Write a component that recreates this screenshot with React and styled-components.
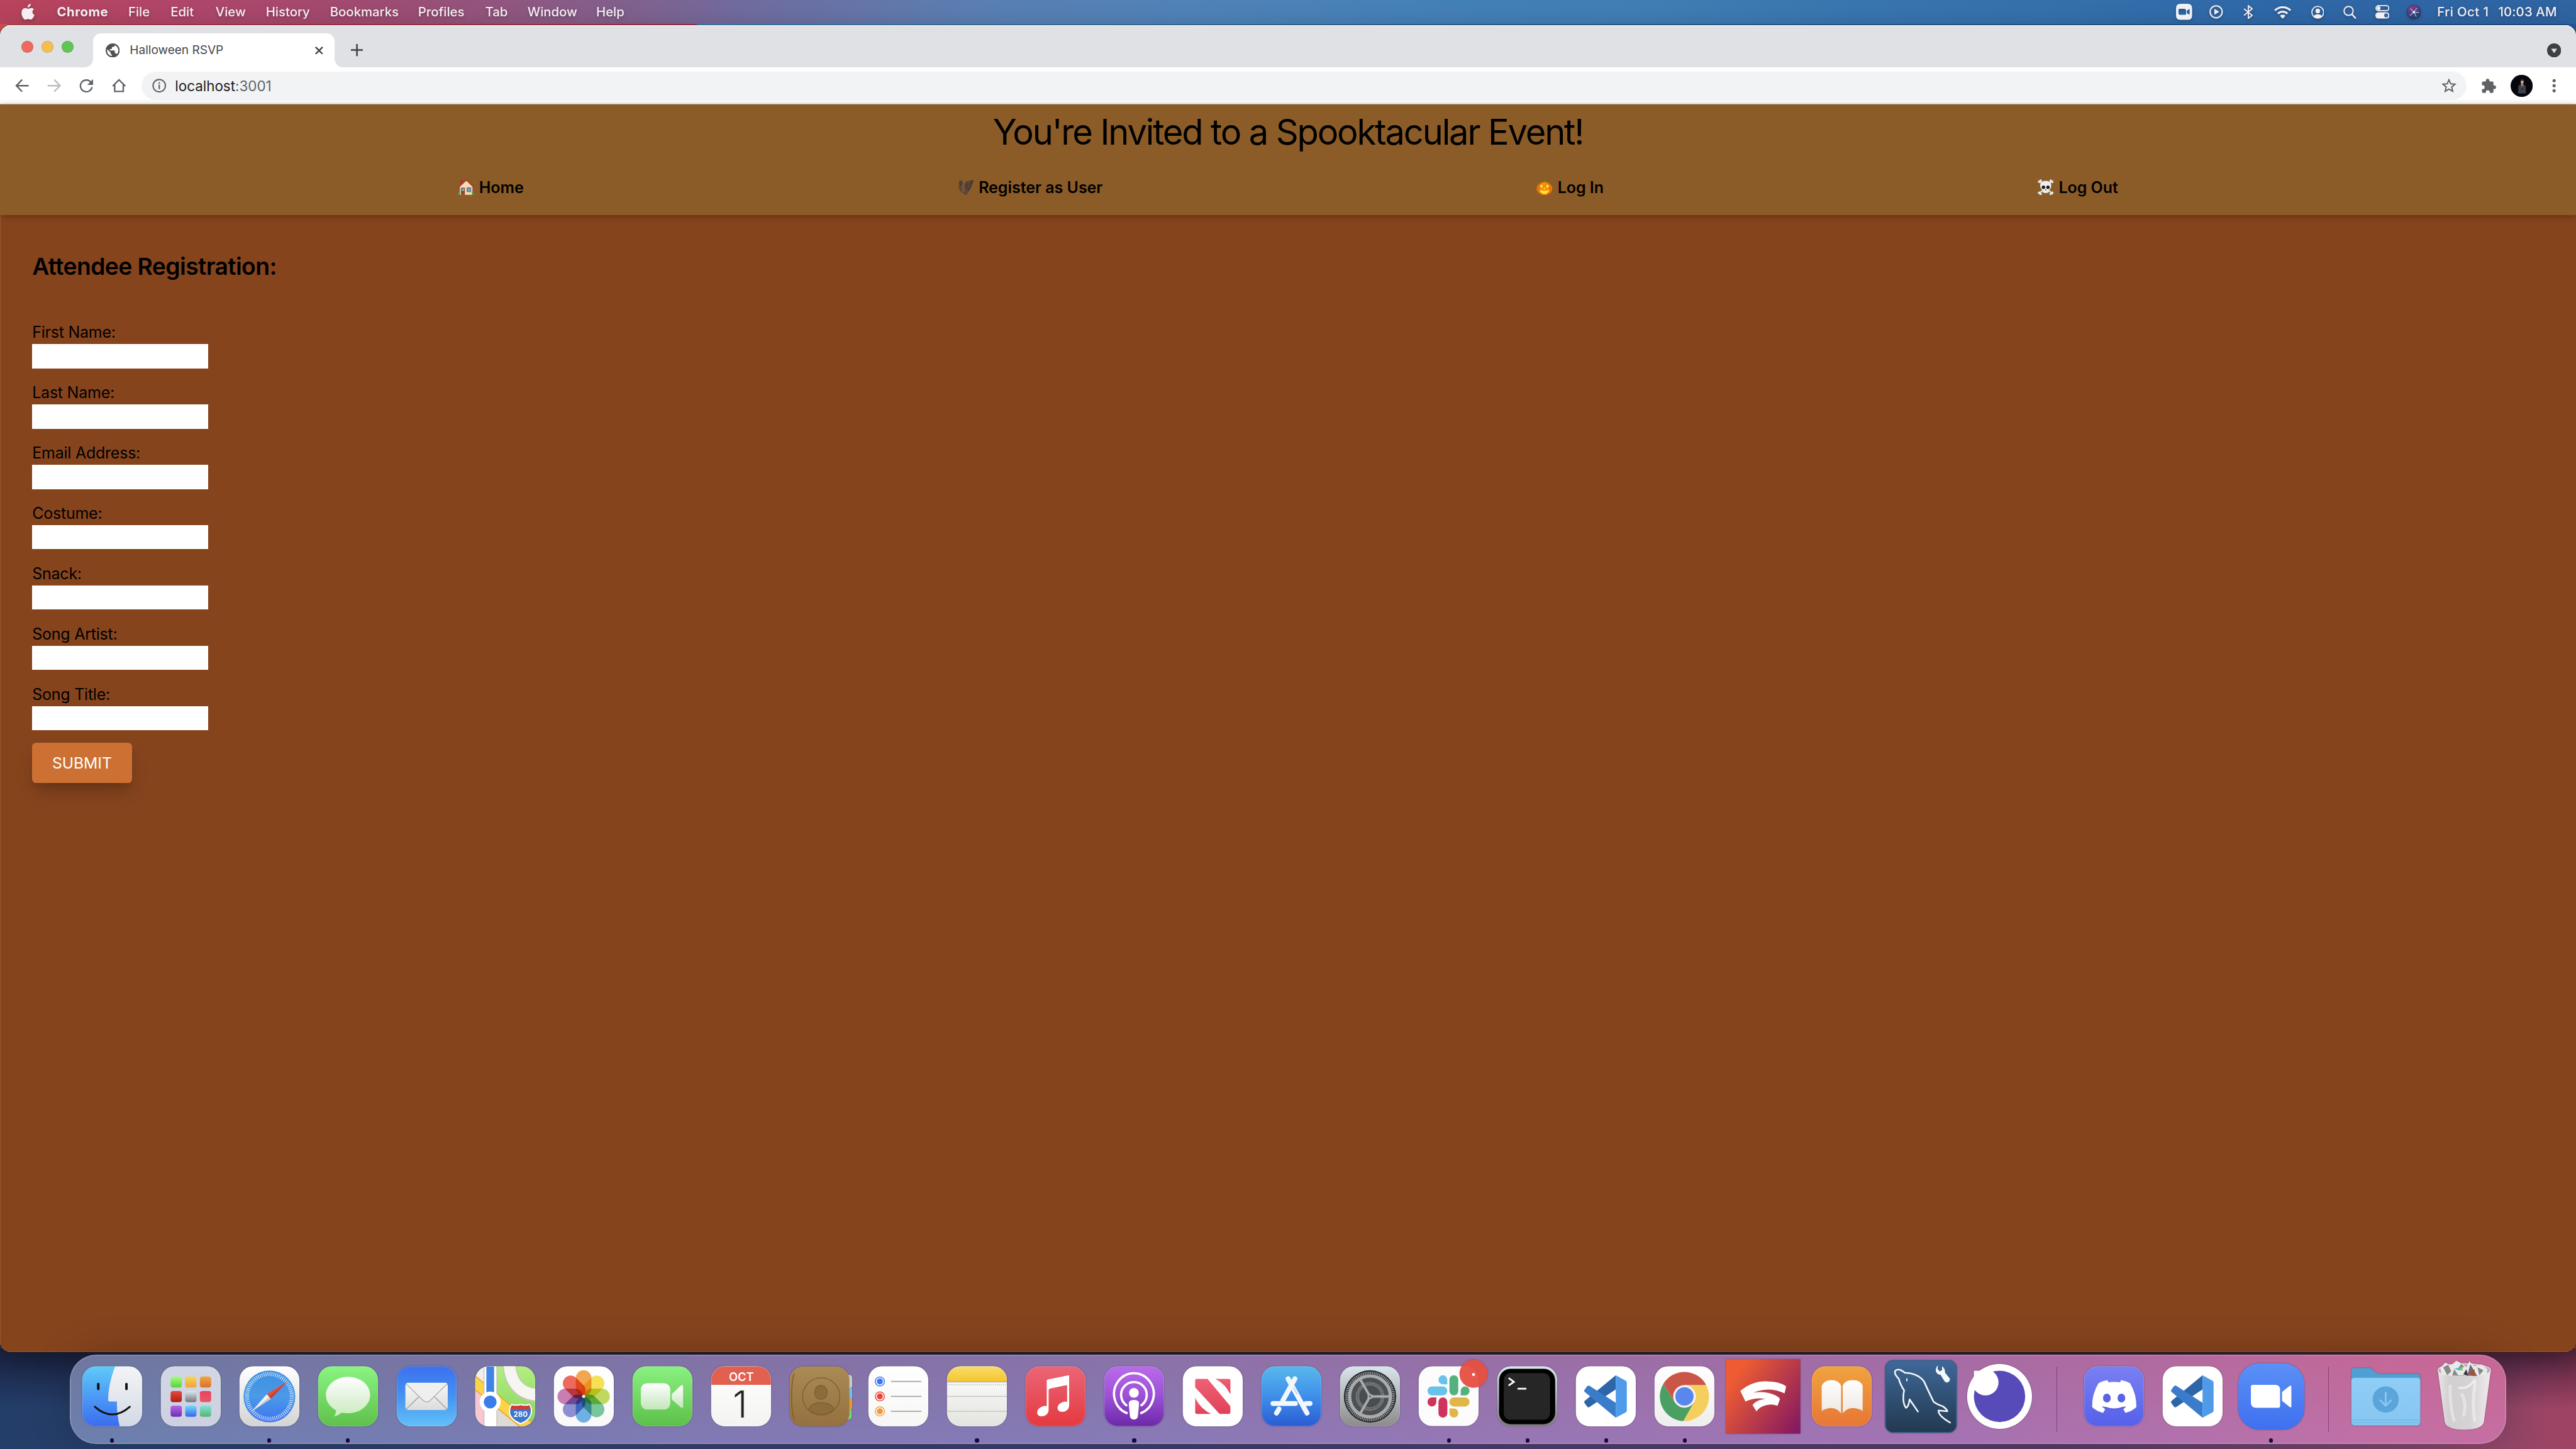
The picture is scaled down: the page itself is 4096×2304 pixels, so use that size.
import React from "react";
import styled, { createGlobalStyle } from "styled-components";

const Global = createGlobalStyle`
  html { font-size: 16px; }
  *, *::before, *::after { box-sizing: border-box; }
  body { margin: 0; overflow: hidden; font-family: Inter, "Liberation Sans", sans-serif; color: #000; }
  svg { display: block; flex: none; }
`;

/* 1rem is ten points of the desktop */
const Desktop = styled.div`
  display: flex;
  flex-direction: column;
  width: 256rem;
  height: 144rem;
  background:
    linear-gradient(90deg, #d4504f 0, #c03a54 8%, #b8334f 27%, #4a8ec2 27.1%, #3f80b8 45%, #2f6db0 60%, #1f5a9c 100%) 0 0 / 100% 5rem no-repeat,
    linear-gradient(180deg, rgba(20, 10, 35, 0.5), rgba(20, 10, 35, 0) 6rem) 0 134rem / 100% 10rem no-repeat,
    linear-gradient(90deg, #233e68 0%, #353f6e 20%, #403d6e 45%, #503d6d 62%, #5a3b68 80%, #7d456c 93%, #92476a 97%, #a04262 100%);
`;

/* ---------- system menu bar ---------- */
const MenuBar = styled.header`
  display: flex;
  align-items: center;
  justify-content: space-between;
  height: 2.4rem;
  flex: none;
  padding: 0 1.9rem 0 2.15rem;
  margin-bottom: 0.1rem;
  color: #f5eef2;
  background: linear-gradient(90deg, #b8435c 0%, #b0466a 7%, #a14a70 14%, #915680 19.5%, #845f8b 23.5%, #706c9f 29%, #5a7fb3 38%, #4f83b8 47%, #4480b8 56%, #407eb4 64%, #3975b0 72%, #3670ac 80%, #2f68a8 88%, #2f64a2 100%);
`;
const MenuGroup = styled.div`
  display: flex;
  align-items: center;
  height: 100%;
  filter: drop-shadow(0 0.15rem 0.15rem rgba(0, 0, 0, 0.25));
`;
const MenuItem = styled.span`
  font-size: 1.27rem;
  line-height: 2.4rem;
  white-space: pre;
  font-weight: ${(p) => (p.$bold ? 700 : 500)};
  letter-spacing: ${(p) => p.$track || 0}rem;
  margin-left: ${(p) => p.$gap}rem;
`;
const StatusIcon = styled.svg`
  width: ${(p) => p.$w}rem;
  height: ${(p) => p.$h}rem;
  margin-left: ${(p) => p.$gap || 0}rem;
`;

/* ---------- browser window ---------- */
const Window = styled.main`
  display: flex;
  flex-direction: column;
  flex: none;
  height: 131.9rem;
  border-radius: 1rem;
  overflow: hidden;
  background: #86441d;
  box-shadow: 0 0 0 0.05rem rgba(0, 0, 0, 0.45), 0 1rem 3rem rgba(0, 0, 0, 0.35);
`;
const TabStrip = styled.div`
  display: flex;
  align-items: flex-end;
  height: 4.2rem;
  flex: none;
  background: #dfe1e5;
  box-shadow: inset 0 0.1rem 0 #f4f5f6;
`;
const Lights = styled.div`
  display: flex;
  gap: 0.8rem;
  padding: 0 1.95rem 1.45rem 2.1rem;
`;
const Light = styled.i`
  width: 1.2rem;
  height: 1.2rem;
  border-radius: 50%;
  background: ${(p) => p.$c};
  box-shadow: inset 0 0 0 0.05rem rgba(0, 0, 0, 0.15);
`;
const Tab = styled.div`
  position: relative;
  display: flex;
  align-items: center;
  width: 24rem;
  height: 3.4rem;
  padding: 0 1.15rem 0 1.25rem;
  border-radius: 0.8rem 0.8rem 0 0;
  background: #fff;
  color: #45484c;
  &::before, &::after {
    content: "";
    position: absolute;
    bottom: 0;
    width: 0.8rem;
    height: 0.8rem;
  }
  &::before { right: 100%; background: radial-gradient(circle at 0 0, transparent 0.78rem, #fff 0.82rem); }
  &::after { left: 100%; background: radial-gradient(circle at 100% 0, transparent 0.78rem, #fff 0.82rem); }
`;
const TabTitle = styled.span`
  flex: 1;
  font-size: 1.19rem;
  margin-left: 1rem;
`;
const StripButton = styled.div`
  margin: 0 0 1.1rem 1.6rem;
`;
const StripEnd = styled.div`
  margin: 0 1.5rem 1rem auto;
`;
const Toolbar = styled.div`
  display: flex;
  align-items: center;
  height: 3.7rem;
  flex: none;
  padding: 0 2rem 0 1.5rem;
  background: #fff;
  border-bottom: 0.1rem solid #d7dbde;
  color: #5f6368;
`;
const NavButtons = styled.div`
  display: flex;
  gap: 1.8rem;
  margin-right: 1.55rem;
`;
const Omnibox = styled.div`
  display: flex;
  align-items: center;
  flex: 1;
  height: 2.8rem;
  padding: 0 1rem 0 1.1rem;
  border-radius: 1.4rem;
  background: #f1f3f4;
`;
const Url = styled.span`
  flex: 1;
  margin-left: 0.85rem;
  font-size: 1.4rem;
  color: #5f6368;
  b { font-weight: 400; color: #202124; }
`;
const Actions = styled.div`
  display: flex;
  align-items: center;
  margin-left: 1.5rem;
`;

/* ---------- page ---------- */
const Masthead = styled.div`
  flex: none;
  height: 11rem;
  background: #8b5c27;
  position: relative;
  box-shadow: 0 0.1rem 0.6rem rgba(70, 20, 0, 0.5);
`;
const Title = styled.h1`
  margin: 0;
  height: 5.4rem;
  line-height: 5.5rem;
  font-size: 3.5rem;
  font-weight: 400;
  text-align: center;
  letter-spacing: -0.134rem;
  box-shadow: 0 0.05rem 0 #875823;
`;
const Links = styled.nav`
  display: flex;
  justify-content: space-evenly;
  align-items: center;
  height: 5.6rem;
  padding: 0 2.4rem;
`;
const Link = styled.a`
  display: flex;
  align-items: center;
  gap: 0.5rem;
  font-size: 1.56rem;
  font-weight: 600;
  svg { width: 1.6rem; height: 1.6rem; }
`;
const Page = styled.section`
  flex: 1;
  padding: 3.3rem 3.2rem;
  box-shadow: inset 0.05rem -0.05rem 0 rgba(255, 190, 130, 0.22);
`;
const Heading = styled.h2`
  margin: 0 0 3.6rem;
  line-height: 3.6rem;
  font-size: 2.33rem;
  font-weight: 600;
  letter-spacing: -0.036rem;
`;
const Field = styled.label`
  display: block;
  width: 17.5rem;
  margin-bottom: 1.3rem;
  font-size: 1.56rem;
  line-height: 2.3rem;
  letter-spacing: -0.013rem;
  white-space: nowrap;
`;
const Input = styled.input`
  display: block;
  width: 100%;
  height: 2.4rem;
  border: 0;
  padding: 0;
  background: #fff;
`;
const Submit = styled.button`
  display: block;
  width: 9.9rem;
  height: 4rem;
  margin-top: -0.1rem;
  border: 0;
  border-radius: 0.4rem;
  padding: 0;
  color: #fff;
  background: #cc7033;
  font: 400 1.54rem/4rem Inter, "Liberation Sans", sans-serif;
  box-shadow: 0 1rem 1.8rem -0.2rem rgba(0, 0, 0, 0.2), 0 0.4rem 0.6rem -0.2rem rgba(0, 0, 0, 0.08);
`;

/* ---------- dock ---------- */
const DockBar = styled.footer`
  position: relative;
  display: flex;
  align-items: center;
  width: 242.15rem;
  height: 8.9rem;
  margin: 0.2rem 0 0 6.93rem;
  padding-left: 0.3rem;
  border-radius: 2.6rem;
  background:
    linear-gradient(180deg, rgba(110, 60, 80, 0.12), rgba(90, 130, 210, 0.12)),
    linear-gradient(90deg, #6e7faa 0%, #7a7cae 15%, #8779b1 28%, #8c7ab3 42%, #a075b1 60%, #ac72b0 75%, #bd70a8 87%, #d26da0 96%, #d46c9c 100%);
  box-shadow: inset 0 0 0 0.1rem rgba(255, 255, 255, 0.2), 0 0 4rem rgba(0, 0, 0, 0.2);
`;
const Cell = styled.div`
  position: relative;
  display: flex;
  justify-content: center;
  width: 7.815rem;
  margin-top: -0.5rem;
  svg {
    width: 7.8rem;
    height: 7.8rem;
    overflow: visible;
    filter: drop-shadow(0 0.05rem 0.08rem rgba(0, 0, 0, 0.35));
  }
`;
const Running = styled.i`
  position: absolute;
  bottom: -0.65rem;
  left: 50%;
  width: 0.4rem;
  height: 0.4rem;
  margin-left: -0.2rem;
  border-radius: 50%;
  background: #1a0638;
`;
const Divider = styled.i`
  width: 0.1rem;
  height: 6.5rem;
  margin: 0 1.7rem 0 1.76rem;
  background: rgba(80, 20, 90, 0.5);
`;
const Petal = styled.rect`
  mix-blend-mode: multiply;
`;

const Grad = ({ id, a, b, m, x2 = 0, y2 = 1 }) => (
  <linearGradient id={id} x1="0" y1="0" x2={x2} y2={y2}>
    <stop offset="0" stopColor={a} />
    {m && <stop offset=".5" stopColor={m} />}
    <stop offset="1" stopColor={b} />
  </linearGradient>
);
const Tile = ({ id, a, b, m, children }) => (
  <svg viewBox="0 0 156 156">
    <defs>
      <Grad id={id} a={a} b={b} m={m} />
      <clipPath id={id + "c"}><rect x="18.5" y="18" width="119" height="119.5" rx="27" /></clipPath>
    </defs>
    <rect x="18.5" y="18" width="119" height="119.5" rx="27" fill={`url(#${id})`} />
    <g clipPath={`url(#${id}c)`}>{children}</g>
    <rect x="19" y="18.5" width="118" height="118.5" rx="26.5" fill="none" stroke="#fff" strokeOpacity=".25" />
  </svg>
);

const Finder = () => (
  <Tile id="fi" a="#5fcaf8" b="#3a6cf0">
    <defs><Grad id="fi2" a="#f4f4f6" b="#d2dae5" /></defs>
    <path d="M84 18C75 40 70 65 70 85q0 3 3 3H87.4C87 105 89 122 93 137.500H140V18Z" fill="url(#fi2)" />
    <path d="M50.300 53.500V63M106.300 53.500V63" stroke="#111" strokeWidth="5" strokeLinecap="round" />
    <path d="M43.500 98.500Q78 129 113 98.500" fill="none" stroke="#111" strokeWidth="3.600" strokeLinecap="round" />
  </Tile>
);
const pads = [["#a2ff7c", "#5bcf3f"], ["#f7d558", "#eda33a"], ["#efa73e", "#dc6f33"], ["#e8483f", "#a91f16"], ["#dbe7ee", "#6f7678"], ["#e8435a", "#e65a68"], ["#b566e8", "#6d2fb0"], ["#6bdcff", "#3a63ea"], ["#82e2d8", "#54b673"]];
const Launchpad = () => (
  <Tile id="lp" a="#d3d6e4" b="#ccd0e0">
    {pads.map(([a, b], i) => (
      <g key={i}>
        <defs><Grad id={"lp" + i} a={a} b={b} /></defs>
        <rect x={37.8 + (i % 3) * 29.1} y={38.3 + Math.floor(i / 3) * 29} width="22.400" height="22" rx="5" fill={`url(#lp${i})`} />
      </g>
    ))}
  </Tile>
);
const Safari = () => (
  <Tile id="sa" a="#ffffff" b="#d4d4d4">
    <defs><Grad id="sa2" a="#3f8fe0" m="#4a9ae8" b="#3f74ee" /></defs>
    <circle cx="78" cy="78" r="51.500" fill="url(#sa2)" />
    <circle cx="78" cy="78" r="44.500" fill="none" stroke="#e8f2fd" strokeWidth="8" strokeDasharray="1.300 2.583" />
    <path d="M114 47.700 72.700 73.700 81 82.700Z" fill="#e84c3d" />
    <path d="M42.600 108 72.700 73.700 81 82.700Z" fill="#f4f4f4" />
    <path d="M42.600 108 114 47.700 81 82.700Z" fill="#000" fillOpacity=".15" />
  </Tile>
);
const Messages = () => (
  <Tile id="ms" a="#8af482" b="#5ec14a">
    <defs><Grad id="ms2" a="#ffffff" m="#e4f3df" b="#c9edbd" /></defs>
    <path d="M78 39C54 39 34 55 34 75c0 13 8 24 20 30.500 0 5-1.500 9-4 12 6-.5 11-3.500 15-7.500 4 .9 8 1.400 13 1.400 24 0 44-16 44-36.400S102 39 78 39Z" fill="url(#ms2)" />
  </Tile>
);
const Mail = () => (
  <Tile id="ma" a="#3c70ee" b="#62c1f8" m="#4492f2">
    <defs><Grad id="ma2" a="#f8f8f8" b="#dcdcdc" /></defs>
    <rect x="35.700" y="51" width="84.300" height="54" rx="6" fill="url(#ma2)" />
    <path d="M38 103 62 79M118 103 94 79" stroke="#9b9b9b" strokeWidth="1.600" />
    <path d="M37 53 71 86q7 6 14 0L119 53" fill="#efefef" stroke="#a9a9a9" strokeWidth="1.600" />
    <path d="M38 52.200H118" stroke="#fff" strokeWidth="2" />
  </Tile>
);
const Maps = () => (
  <Tile id="mp" a="#b2ee80" b="#8ad25a">
    <path d="M18 18H45V100H18Z" fill="#efefea" />
    <path d="M18 55 45 90V140H18Z" fill="#f7c6d2" />
    <path d="M61 92 137 150H61Z" fill="#dedbd2" />
    <path d="M10 44 150 160" stroke="#f0a02e" strokeWidth="23" />
    <path d="M10 44 150 160" stroke="#fad549" strokeWidth="19" />
    <path d="M86 8C86 48 106 75 145 76" fill="none" stroke="#c7c4ba" strokeWidth="27" />
    <path d="M86 8C86 48 106 74 145 75" fill="none" stroke="#f6f5f0" strokeWidth="23" />
    <rect x="35" y="18" width="27" height="120" fill="#bdbab3" />
    <rect x="36.500" y="18" width="24" height="120" fill="#fff" />
    <rect x="40.400" y="18" width="15.400" height="60" fill="#3f83e6" />
    <circle cx="48" cy="89" r="20.700" fill="#fff" />
    <circle cx="48" cy="89" r="12.800" fill="#3b7de8" />
    <path d="M91 94q8 3 17.500 0 9 3 17 0 7 8 3.500 20-4 12-20.500 18Q92 126 87 114q-2-12 4-20Z" fill="#3c76cf" stroke="#fff" strokeWidth="2.500" />
    <path d="M91 95.500q8 3 17.500 0 9 3 17 0l3 7.500H88Z" fill="#d8392f" />
    <text x="108.500" y="119" textAnchor="middle" fontSize="14.500" fontWeight="700" fill="#fff">280</text>
  </Tile>
);
const petals = ["#f09a37", "#f5dd3c", "#b5d34a", "#66bd8e", "#5aa5e0", "#7d7fcb", "#c06ba8", "#ea5545"];
const Photos = () => (
  <Tile id="ph" a="#ffffff" b="#f8f8f8">
    {petals.map((c, i) => (
      <Petal key={c} x="62" y="26" width="31" height="51" rx="15.500" fill={c} fillOpacity=".88" transform={`rotate(${i * 45} 77.500 78)`} />
    ))}
    <circle cx="77.500" cy="78" r="3" fill="#fff" />
  </Tile>
);
const FaceTime = () => (
  <Tile id="ft" a="#8af080" b="#5cc04a">
    <defs><Grad id="ft2" a="#ffffff" b="#c3e6ba" /></defs>
    <rect x="35" y="52" width="58.500" height="52" rx="12" fill="url(#ft2)" />
    <path d="M96.500 73 114 57q5-3.500 5 2V97q0 6-5 2.500L96.500 84Z" fill="url(#ft2)" />
  </Tile>
);
const Calendar = () => (
  <Tile id="ca" a="#ffffff" b="#f3f3f1">
    <rect x="18" y="18" width="120" height="37" fill="#e2604f" />
    <text x="78.500" y="47" textAnchor="middle" fontSize="23" fontWeight="600" fill="#fff">OCT</text>
    <text x="76" y="119.500" textAnchor="middle" fontSize="73" fontWeight="300" fill="#222">1</text>
  </Tile>
);
const Contacts = () => (
  <svg viewBox="0 0 156 156">
    <defs><Grad id="co" a="#ab8a54" b="#94713f" /></defs>
    <rect x="124" y="35" width="18.500" height="28" rx="6" fill="#c9c9c6" />
    <rect x="124" y="61" width="18.500" height="23" rx="4" fill="#6fbdf2" />
    <rect x="124" y="82" width="18.500" height="22" rx="4" fill="#f0962f" />
    <rect x="124" y="102" width="17.500" height="22" rx="6" fill="#77d46b" />
    <rect x="18.500" y="18.500" width="118.500" height="119" rx="26" fill="url(#co)" />
    <path d="M27 32Q22 50 22 78T27 124" fill="none" stroke="#7c5d30" strokeWidth="2" />
    <g fill="#8d6c3b" stroke="#7d5d2e" strokeWidth="1.600">
      <circle cx="81" cy="78" r="37" fill="none" />
      <ellipse cx="80.500" cy="70" rx="12.500" ry="14" />
      <path d="M55.500 104q6-13.500 25.500-13.500T106.500 104A37 37 0 0 1 55.500 104Z" />
    </g>
  </svg>
);
const Reminders = () => (
  <Tile id="re" a="#ffffff" b="#f6f6f5">
    {["#3478f6", "#e8453a", "#ef9a37"].map((c, i) => (
      <g key={c} transform={`translate(41.300 ${48.300 + i * 29.7})`}>
        <circle r="9" fill="#fff" stroke={c} strokeWidth="1.800" />
        <circle r="6" fill={c} />
        <path d="M22 0H82.500" stroke="#a3a3a8" strokeWidth="2" />
      </g>
    ))}
  </Tile>
);
const Notes = () => (
  <Tile id="no" a="#ffffff" b="#e3e3df">
    <defs><Grad id="no2" a="#f9dc6c" b="#f4c62f" /></defs>
    <rect x="18" y="18" width="120" height="30.500" fill="url(#no2)" />
    <path d="M18 49.300H138" stroke="#a8a294" strokeWidth="1.600" />
    <path d="M18 54.500H138" stroke="#b4b4b4" strokeWidth="2" strokeDasharray="1.500 2.500" />
    <path d="M18 78H138M18 107.700H138" stroke="#cbcbcd" strokeWidth="2" />
  </Tile>
);
const Music = () => (
  <Tile id="mu" a="#ea6677" b="#e5393f">
    <path d="M103 36.200 62.500 44.500q-2 .5-2 2.500V97.500c-3-1-7-.5-11 1.500-5 2.500-8 6-8 11 0 5 4 7.500 9 7.500 8 0 13.700-5 13.700-13V66q0-3 2.500-3.500L99 55.700q2-.3 2 2V89c-3-1-7-.7-11 1.200-5 2.300-8 6-8 10.800 0 5 4 7.700 9 7.700 8 0 14-5 14-13V38q0-2.200-2-1.800Z" fill="#fff" />
  </Tile>
);
const Podcasts = () => (
  <Tile id="po" a="#b96bea" b="#6c28a8" m="#9b50d6">
    <g fill="none" stroke="#fff" strokeWidth="4.600" strokeLinecap="round">
      <path d="M63 111A39.500 41 0 1 1 92 111" />
      <path d="M62.500 95.500A25.500 25.500 0 1 1 92.500 95.500" />
    </g>
    <circle cx="77.500" cy="71" r="9.600" fill="#fff" />
    <path d="M77.500 85c6.500 0 10.500 2.500 10.200 8L85.500 117q-.9 7-8 7t-8-7L67.300 93c-.3-5.500 3.700-8 10.200-8Z" fill="#fff" />
  </Tile>
);
const News = () => (
  <Tile id="ne" a="#ffffff" b="#ffffff">
    <defs><Grad id="ne2" a="#ee6175" b="#e04258" /></defs>
    <g fill="url(#ne2)">
      <path d="M46 43H67.600L113 97.500V110q0 2.700-3 2.700H91.500L43 60V46q0-3 3-3Z" />
      <path d="M83 43H110q3 0 3 3V73.700Q103 53 83 43Z" />
      <path d="M43 81Q54 103 74.600 112.700H46q-3 0-3-3Z" />
    </g>
  </Tile>
);
const AppStore = () => (
  <Tile id="as" a="#58b8ec" b="#2a5bd4" m="#3f8fe8">
    <g stroke="#f1f7fd" strokeWidth="9.800" strokeLinecap="round">
      <path d="M71.500 43 109 111" />
      <path d="M41.500 92H86M107 92H115" />
      <path d="M53.300 103 48.500 111" />
      <path d="M85 43 61 86" />
    </g>
    <path d="M82 60 89.500 73.500" stroke="#bcd3ec" strokeWidth="2" />
  </Tile>
);
const Settings = () => (
  <Tile id="se" a="#d9e4ec" b="#8c8c89">
    <circle cx="78" cy="78" r="52" fill="#23272a" />
    <circle cx="78" cy="78" r="46.500" fill="none" stroke="#9a9da0" strokeWidth="6" strokeDasharray="2 1.650" />
    <circle cx="78" cy="78" r="40.500" fill="#4d5052" stroke="#a9acae" strokeWidth="6.500" />
    <circle cx="78" cy="78" r="26.500" fill="#3b3d3f" stroke="#8b8e90" strokeWidth="4" strokeDasharray="2 1.300" />
    <circle cx="78" cy="78" r="23" fill="#4a4d4f" stroke="#777" strokeWidth="2.500" />
    <path d="M78 78H118M78 78 58 43M78 78 58 113" stroke="#a9acae" strokeWidth="5" />
    <circle cx="78" cy="78" r="4" fill="#777b7d" stroke="#b9bcbe" strokeWidth="2" />
  </Tile>
);
const Slack = () => (
  <svg viewBox="0 0 156 156">
    <rect x="18.500" y="18" width="119" height="119" rx="27" fill="#fcfcfc" />
    <path d="M75.400 54H66.600A8.800 9 0 1 1 75.400 45Z" fill="#68c2ea" />
    <rect x="36" y="58" width="39.400" height="18" rx="9" fill="#68c2ea" />
    <rect x="79.600" y="36" width="17.600" height="40" rx="8.800" fill="#55b07e" />
    <path d="M102 76V67A8.800 9 0 1 1 110.800 76Z" fill="#55b07e" />
    <path d="M53.600 80V89A8.800 9 0 1 1 44.800 80Z" fill="#cd335b" />
    <rect x="57.800" y="80" width="17.600" height="40" rx="8.800" fill="#cd335b" />
    <rect x="79.600" y="80" width="40" height="18" rx="9" fill="#e2b548" />
    <path d="M79.600 102H88.400A8.800 9 0 1 1 79.600 111Z" fill="#e2b548" />
    <circle cx="127.500" cy="33" r="28" fill="#e65245" fillOpacity=".97" />
    <circle cx="127.500" cy="34.500" r="3" fill="#fff" />
  </svg>
);
const Terminal = () => (
  <Tile id="te" a="#d8e6ee" b="#737371">
    <rect x="22" y="23" width="111.500" height="110" rx="23" fill="#000" />
    <rect x="31.300" y="31.700" width="92" height="92.600" rx="13" fill="#262626" />
    <path d="M41 41.500 51.500 49 41 56.500" fill="none" stroke="#fff" strokeWidth="3.400" />
    <path d="M58.700 62.700H76.200" stroke="#fff" strokeWidth="3.600" />
  </Tile>
);
const Code = () => (
  <Tile id="vs" a="#ffffff" b="#ffffff">
    <path d="M97.700 36 36 87q-2 2 0 4.500L41 98.500q2 1.800 4.500.5L97.700 64Z" fill="#2d65a9" />
    <path d="M97.700 120.300 36 69q-2-2 0-4.500L41 57.500q2-1.800 4.500-.5L97.700 90.500Z" fill="#3a7bca" />
    <path d="M97.700 36 117 46.500q2.700 1.500 2.700 4.500V105.500q0 3-2.700 4.500L97.700 120.300Z" fill="#4f9bea" />
  </Tile>
);
const Chrome = () => (
  <Tile id="ch" a="#ffffff" b="#ededed">
    <path d="M35.900 53A49 49 0 0 0 76 127L97.500 89.200 58.500 89.200Z" fill="#4c9f63" />
    <path d="M78 55.500H121.300A49 49 0 0 0 35.900 53L58.500 89.200Z" fill="#cb5648" />
    <path d="M97.500 89.200 76 127A49 49 0 0 0 121.300 55.500H78Z" fill="#f5cf5d" />
    <circle cx="78" cy="78" r="22.400" fill="#f3f3f3" />
    <circle cx="78" cy="78" r="18.200" fill="#5a87ee" />
  </Tile>
);
const Stadia = () => (
  <svg viewBox="0 0 156 156">
    <defs><linearGradient id="st" x1="0" y1=".2" x2="1" y2=".9"><stop offset=".1" stopColor="#ee5c33" /><stop offset="1" stopColor="#84195f" /></linearGradient></defs>
    <rect x="4" y="4" width="148" height="148" fill="url(#st)" />
    <path d="M34 66Q56 47 85.500 48 109 48 122.500 57q1.300 1 1 3L120.700 72Q102 63 87 64.500 70 65.500 58.300 70.500 74 68 88 71 105 75 110.500 81.500q1 1 .8 2.500L106.700 96.500Q94 92 82 96 71 99 64.800 107.500L57 95Q66 84 82.500 83 62 79.500 43 88L33.500 68.500Q33 67 34 66Z" fill="#fff" />
  </svg>
);
const Books = () => (
  <Tile id="bo" a="#f0a340" b="#e77635">
    <defs><Grad id="bo2" a="#ffffff" b="#ede7e1" /></defs>
    <path d="M76.800 112V57Q72 45.500 57.500 45.500T38.300 57V107Q46 101.500 57 101 70 102 76.800 112ZM80 112V57Q84 45.500 100 45.500T119.700 57V107Q112 101.500 100 101 87 102 80 112Z" fill="url(#bo2)" />
  </Tile>
);
const MySql = () => (
  <svg viewBox="0 0 156 156">
    <defs><Grad id="my" a="#3f6899" b="#22394f" /></defs>
    <rect x="6" y="5" width="144" height="146" rx="17" fill="#3f6899" fillOpacity=".35" />
    <rect x="7.500" y="7" width="141" height="142.500" rx="15" fill="url(#my)" stroke="#34608c" strokeWidth="1.500" />
    <g fill="none" stroke="#f2f8fc" strokeWidth="3.200" strokeLinejoin="round" strokeLinecap="round">
      <path d="M72 108 55.500 84Q53 100 48 100.500 40 88 44.600 66 37 55 34 43 24 33 27 27 34 21 46 31 72 32 84 48 93 68 103 88.500 110 94 122 98 130 104 130.500 107.500L113 106Q112 116 136 130" />
      <path d="M50 43v4" strokeWidth="2.500" />
    </g>
    <path d="M112 16q-6 6-4 13 3 6 9 6l8 13q4 4 8 1 4-3 2-7L126 31q0-9-6-13v8l-5 2-4-5Z" fill="#f2f8fc" />
  </svg>
);
const Insomnia = () => (
  <svg viewBox="0 0 156 156">
    <circle cx="78" cy="78" r="64.500" fill="#fff" />
    <circle cx="78" cy="78" r="51" fill="#564bb8" />
    <circle cx="50" cy="50" r="26" fill="#fff" />
    <path d="M27 67V27H65L45 50Z" fill="#fff" />
  </svg>
);
const Discord = () => (
  <Tile id="di" a="#7a80f2" b="#5560ea">
    <path d="M65 45.500Q54 47.500 47 52 34 74 34.500 99 43 107.500 56.500 110.500L60.500 103 57 101 61 98.500Q78 105 96 98.500L100 101 96.500 103 100.500 110.500Q114 107.500 122.500 99 123 74 110 52 103 47.500 92 45.500L90 50Q78 48 67 50Z" fill="#fff" />
    <ellipse cx="63.800" cy="81.300" rx="7.700" ry="8.700" fill="#5a63e0" />
    <ellipse cx="92.700" cy="81.300" rx="7.700" ry="8.700" fill="#5a63e0" />
    <path d="M55 98.500Q78 109 101 98.500" fill="none" stroke="#5a63e0" strokeWidth="2" />
  </Tile>
);
const Zoom = () => (
  <svg viewBox="0 0 156 156">
    <defs><Grad id="zo" a="#5a90f6" b="#3f70f0" /></defs>
    <rect x="12.300" y="12" width="131.700" height="132" rx="42" fill="url(#zo)" />
    <path d="M41 55H86Q95.600 55 95.600 65V97q0 3.700-3.500 3.700H48Q37.600 100.700 37.600 90V58.500Q37.600 55 41 55Z" fill="#fff" />
    <path d="M99.500 69 115 57q3-1.500 3 1.500V97.500q0 3.500-3 1.500L99.500 87Z" fill="#fff" />
  </svg>
);
const Downloads = () => (
  <svg viewBox="0 0 156 156">
    <defs><Grad id="fo" a="#8dcdf6" b="#86c6f0" /></defs>
    <path d="M9.700 28q0-6.300 6-6.300H45q4 0 7 3l7 6q2.500 2.300 6 2.300H141q5.800 0 5.800 6V60H9.700Z" fill="#4f9fd3" />
    <rect x="9.700" y="41" width="137.100" height="95" rx="6" fill="url(#fo)" />
    <path d="M9.700 125H146.800M9.700 130H146.800" stroke="#6db4e2" strokeWidth="1.500" />
    <path d="M10.500 131q1 4.500 6 4.500H140q5 0 6-4.500" fill="none" stroke="#62abd9" strokeWidth="1.300" />
    <circle cx="78" cy="84" r="26" fill="#5ba5da" />
    <path d="M78 70.500V96M67.500 86 78 96.500 88.500 86" fill="none" stroke="#86c8f3" strokeWidth="3.600" strokeLinecap="round" strokeLinejoin="round" />
  </svg>
);
const Trash = () => (
  <svg viewBox="0 0 156 156">
    <defs>
      <linearGradient id="tr" x1="0" x2="1"><stop offset="0" stopColor="#ececec" /><stop offset=".2" stopColor="#d5d5d5" /><stop offset=".6" stopColor="#d9d8d8" /><stop offset="1" stopColor="#f2f0f0" /></linearGradient>
    </defs>
    <ellipse cx="78" cy="26" rx="52.500" ry="13" fill="#b9a9b2" stroke="#eee" strokeWidth="1.500" />
    <path d="M30 22 40 11 52 16 62 7 74 13 82 20 88 8 98 18 112 14 124 24 122 36H34Z" fill="#e9e9e9" />
    <path d="M36 20 46 15 52 28 44 36ZM58 24 66 36H54ZM72 13 66 22 78 20ZM104 20 116 26 108 36Z" fill="#888" />
    <path d="M84 36 90 14 96 24 104 38Z" fill="#6f6a78" />
    <path d="M88 30 98 24 100 36H90Z" fill="#a5523a" />
    <path d="M58 23 72 20 70 27Z" fill="#3cb9e8" />
    <path d="M66 24 74 20 75 27Z" fill="#76c94b" />
    <path d="M76 34 82 24 86 37Z" fill="#3a3a3a" />
    <path d="M25.500 27Q30 38.500 78 38.500T130.500 27L117 128Q114 144 78 144T39 128Z" fill="url(#tr)" fillOpacity=".96" />
    <path d="M50 55Q48 95 58 128M100 48Q92 92 99 128M72 72Q84 90 76 118" fill="none" stroke="#fff" strokeOpacity=".4" strokeWidth="6" />
    <path d="M66 60Q84 66 100 44" fill="none" stroke="#fff" strokeOpacity=".6" strokeWidth="4" />
  </svg>
);

const dock = [
  [Finder, 1], [Launchpad], [Safari, 1], [Messages, 1], [Mail], [Maps], [Photos], [FaceTime], [Calendar], [Contacts],
  [Reminders], [Notes, 1], [Music], [Podcasts, 1], [News], [AppStore], [Settings], [Slack, 1], [Terminal, 1], [Code, 1],
  [Chrome, 1], [Stadia], [Books], [MySql], [Insomnia], null, [Discord], [Code], [Zoom, 1], null, [Downloads], [Trash],
];

/* ---------- emoji for the page links ---------- */
const House = () => (
  <svg viewBox="0 0 32 32">
    <path d="M5 1h6v8l-6 5Z" fill="#a33a30" />
    <path d="M4 13 17 3 29 13V31H4Z" fill="#f0dfb4" />
    <path d="M1 16 17 1 31 15" fill="none" stroke="#b5352d" strokeWidth="2.400" />
    <rect x="6" y="17" width="8" height="14" fill="#8a4a33" />
    <rect x="7.500" y="19" width="5" height="4" fill="#74b6e8" />
    <rect x="18" y="17" width="8" height="8" fill="#5d9fd8" stroke="#8a4a33" />
    <path d="M0 31q0-6 4-6v6ZM32 31q0-6-4-6v6Z" fill="#4f9a35" />
  </svg>
);
const Bat = () => (
  <svg viewBox="0 0 32 32">
    <path d="M31 1 18 4Q13 8 12 13L9 2 3 3Q1 10 2 17 3 24 9 27L14 31 18 31Q19 26 23 23 29 15 31 1Z" fill="#5b4638" />
    <path d="M30 2 18 14M30 3 20 22M18 5 17 20M4 4 8 20" stroke="#3a2a20" strokeWidth="1.200" />
    <path d="M8 9q5 2 6 9l-1 9-5-3Z" fill="#74543f" />
    <path d="M6 14l2 2" stroke="#c8402c" strokeWidth="2" />
  </svg>
);
const Pumpkin = () => (
  <svg viewBox="0 0 32 32">
    <path d="M14 8Q14 3 17 0l3 2Q18 5 19 8Z" fill="#4c8a1f" />
    <ellipse cx="16" cy="18.500" rx="15.500" ry="13" fill="#e8760c" />
    <ellipse cx="16" cy="18.500" rx="9" ry="13" fill="#f58b12" />
    <ellipse cx="10" cy="14" rx="2.400" ry="3" fill="#ffee2e" />
    <ellipse cx="22" cy="14" rx="2.400" ry="3" fill="#ffee2e" />
    <path d="M16 17l2.500 3h-5ZM6 21q3 2 10 2t10-2q-3 8-10 8T6 21Z" fill="#ffee2e" />
  </svg>
);
const Skull = () => (
  <svg viewBox="0 0 32 32">
    <path d="M4 4 28 28M28 4 4 28" stroke="#d9d9dc" strokeWidth="3.400" />
    <g fill="#e6e6e8"><circle cx="3" cy="5" r="2.600" /><circle cx="6" cy="3" r="2.600" /><circle cx="29" cy="5" r="2.600" /><circle cx="26" cy="3" r="2.600" /><circle cx="3" cy="27" r="2.600" /><circle cx="6" cy="29.500" r="2.400" /><circle cx="29" cy="27" r="2.600" /><circle cx="26" cy="29.500" r="2.400" /></g>
    <path d="M16 3C9 3 5 7 5 13c0 4 2 7 5 8v5q6 3 12 0V21c3-1 5-4 5-8C27 7 23 3 16 3Z" fill="#eeeef0" />
    <circle cx="11.500" cy="16" r="3.400" fill="#1c1c1c" /><circle cx="20.500" cy="16" r="3.400" fill="#1c1c1c" />
    <path d="M16 19l1.500 3h-3Z" fill="#333" />
  </svg>
);

const stroke = { fill: "none", stroke: "currentColor" };
const Apple = () => (
  <StatusIcon $w={1.3} $h={1.6} viewBox="0 0 26 32" fill="currentColor">
    <path d="M18.500 0c.3 3.800-2.700 7.200-6.200 7.300C12 3.700 15 .4 18.500 0ZM25 11c-4.500 2.700-3.700 9.300 1 11.200-1.600 4.600-4.500 9.400-7.300 9.400-2 0-2.800-1.200-5.200-1.200s-3.300 1.200-5.200 1.200C4.600 31.600.3 24.600.3 18.300c0-6 3.700-9.800 7.500-9.800 2.300 0 4 1.500 5.700 1.500 1.500 0 3.500-1.700 6.500-1.600 2 .1 3.900 1 5 2.600Z" />
  </StatusIcon>
);

const menus = [["File", 1.98], ["Edit", 2.07], ["View", 2.17], ["History", 2], ["Bookmarks", 2], ["Profiles", 1.92], ["Tab", 2.07], ["Window", 1.96], ["Help", 1.89]];
const fields = ["First Name:", "Last Name:", "Email Address:", "Costume:", "Snack:", "Song Artist:", "Song Title:"];
const links = [[House, "Home"], [Bat, "Register as User"], [Pumpkin, "Log In"], [Skull, "Log Out"]];

export default function App() {
  return (
    <Desktop>
      <Global />
      <MenuBar>
        <MenuGroup>
          <Apple />
          <MenuItem $bold $gap={2.2} $track={0.035}>Chrome</MenuItem>
          {menus.map(([m, g]) => <MenuItem key={m} $gap={g}>{m}</MenuItem>)}
        </MenuGroup>
        <MenuGroup>
          <StatusIcon $w={1.6} $h={1.6} viewBox="0 0 32 32"><path fillRule="evenodd" fill="#eef2f8" d="M9 0H23Q32 0 32 9V23Q32 32 23 32H9Q0 32 0 23V9Q0 0 9 0ZM7 10Q5 10 5 12V18Q5 22 9 22H18Q20 22 20 20V14Q20 10 16 10ZM21.500 14V18.500L27 22V10Z" /></StatusIcon>
          <StatusIcon $w={1.35} $h={1.35} $gap={1.72} viewBox="0 0 27 27"><circle cx="13.500" cy="13.500" r="12" {...stroke} strokeWidth="2.600" /><path d="M10 7.500v12l9.500-6Z" fill="currentColor" /></StatusIcon>
          <StatusIcon $w={1} $h={1.4} $gap={2.05} viewBox="0 0 20 28"><path d="M1.500 7.500 17.500 20.500 10 26.500V1.500L17.500 7.500 1.500 20.500" {...stroke} strokeWidth="2.400" /></StatusIcon>
          <StatusIcon $w={1.7} $h={1.3} $gap={2.05} viewBox="0 0 34 26"><g {...stroke} strokeWidth="4"><path d="M1.500 9.500A22 22 0 0 1 32.500 9.500" /><path d="M7.500 15.800A13.500 13.500 0 0 1 26.500 15.800" /></g><path d="M11.500 20a8 8 0 0 1 11 0L17 25.800Z" fill="currentColor" /></StatusIcon>
          <StatusIcon $w={1.3} $h={1.3} $gap={1.95} viewBox="0 0 26 26"><circle cx="13" cy="13" r="11.700" {...stroke} strokeWidth="2.200" /><circle cx="13" cy="10.500" r="4.600" fill="currentColor" /><path d="M4.500 20.500Q8 16.800 13 16.800T21.500 20.500Q18 25 13 25T4.500 20.500Z" fill="currentColor" /></StatusIcon>
          <StatusIcon $w={1.3} $h={1.3} $gap={1.9} viewBox="0 0 26 26"><circle cx="10.500" cy="10.500" r="9" {...stroke} strokeWidth="2.500" /><path d="M17 17 24 24.500" {...stroke} strokeWidth="3" strokeLinecap="round" /></StatusIcon>
          <StatusIcon $w={1.4} $h={1.35} $gap={1.9} viewBox="0 0 28 27"><rect x="1.200" y="1.200" width="25.600" height="10" rx="5" {...stroke} strokeWidth="2.200" /><circle cx="6.500" cy="6.200" r="3.800" fill="currentColor" /><rect y="14.500" width="28" height="12.500" rx="6.200" fill="currentColor" /><circle cx="21.500" cy="20.700" r="4" fill="#3268a6" stroke="none" /></StatusIcon>
          <StatusIcon $w={1.4} $h={1.4} $gap={1.7} viewBox="0 0 28 28"><defs><linearGradient id="siri" x1="0" y1="0" x2=".4" y2="1"><stop offset="0" stopColor="#c2317e" /><stop offset=".5" stopColor="#5b3b86" /><stop offset="1" stopColor="#1d3f6b" /></linearGradient></defs><circle cx="14" cy="14" r="13.600" fill="url(#siri)" stroke="#25305c" /><path d="M14 14 7 7M14 14 20 6M14 14 24 15M14 14 19 23M14 14 6 21" stroke="#a9f0ee" strokeWidth="1.300" /><circle cx="14" cy="14" r="2.200" fill="#fff" /></StatusIcon>
          <MenuItem $gap={1.65} $track={0.026}>Fri Oct 1</MenuItem>
          <MenuItem $gap={0.95} $track={0.01}>10:03 AM</MenuItem>
        </MenuGroup>
      </MenuBar>

      <Window>
        <TabStrip>
          <Lights><Light $c="#ec6a5e" /><Light $c="#f4bf4f" /><Light $c="#61c554" /></Lights>
          <Tab>
            <StatusIcon $w={1.4} $h={1.4} viewBox="2 2 20 20"><path fill="#4d5156" d="M12 2C6.480 2 2 6.480 2 12s4.480 10 10 10 10-4.480 10-10S17.520 2 12 2zm-1 17.930c-3.950-.49-7-3.850-7-7.930 0-.62.08-1.210.21-1.790L9 15v1c0 1.100.9 2 2 2v1.930zm6.900-2.540c-.26-.81-1-1.390-1.900-1.390h-1v-3c0-.55-.45-1-1-1H8v-2h2c.55 0 1-.45 1-1V7h2c1.100 0 2-.9 2-2v-.41c2.930 1.190 5 4.060 5 7.410 0 2.080-.8 3.970-2.100 5.390z" /></StatusIcon>
            <TabTitle>Halloween RSVP</TabTitle>
            <StatusIcon $w={0.8} $h={0.8} viewBox="0 0 16 16"><path d="M1 1 15 15M15 1 1 15" {...stroke} strokeWidth="3" /></StatusIcon>
          </Tab>
          <StripButton><StatusIcon $w={1.2} $h={1.2} viewBox="0 0 24 24"><path d="M12 0V24M0 12H24" stroke="#3c4043" strokeWidth="3.200" /></StatusIcon></StripButton>
          <StripEnd><StatusIcon $w={1.4} $h={1.4} viewBox="0 0 28 28"><circle cx="14" cy="14" r="14" fill="#3c4043" /><path d="M8 10.500H20L14 19.500Z" fill="#dfe1e5" /></StatusIcon></StripEnd>
        </TabStrip>
        <Toolbar>
          <NavButtons>
            <StatusIcon $w={1.4} $h={1.4} viewBox="0 0 28 28"><path d="M27 14H3M14 2 2.500 14 14 26" {...stroke} strokeWidth="3" /></StatusIcon>
            <StatusIcon $w={1.4} $h={1.4} viewBox="0 0 28 28"><path d="M1 14H25M14 2 25.500 14 14 26" fill="none" stroke="#babcbe" strokeWidth="3" /></StatusIcon>
            <StatusIcon $w={1.4} $h={1.4} viewBox="0 0 28 28"><path d="M23.500 7.500A11.700 11.700 0 1 0 25.500 17" {...stroke} strokeWidth="3" /><path d="M27.500 1V12.500H16Z" fill="currentColor" /></StatusIcon>
            <StatusIcon $w={1.4} $h={1.4} viewBox="0 0 28 28"><path d="M5.500 12.500V25.500H22.500V12.500M1.500 15 14 2.500 26.500 15" {...stroke} strokeWidth="3" /></StatusIcon>
          </NavButtons>
          <Omnibox>
            <StatusIcon $w={1.4} $h={1.4} viewBox="0 0 28 28"><circle cx="14" cy="14" r="12.300" {...stroke} strokeWidth="2.600" /><path d="M14 12V21M14 7.200V10" {...stroke} strokeWidth="2.800" /></StatusIcon>
            <Url><b>localhost</b>:3001</Url>
            <StatusIcon $w={1.5} $h={1.5} viewBox="0 0 30 30"><path d="M15 3.500 18.400 11.600 27 12.300 20.500 18 22.500 26.500 15 22 7.500 26.500 9.500 18 3 12.300 11.600 11.600Z" {...stroke} strokeWidth="2.500" /></StatusIcon>
          </Omnibox>
          <Actions>
            <StatusIcon $w={1.45} $h={1.45} viewBox="0 0 29 29"><path d="M25 13.500H23.500V8q0-2.500-2.500-2.500H15.500V4a3.600 3.600 0 0 0-7.200 0V5.500H3Q.6 5.500.6 8v5.200H2a3.900 3.900 0 0 1 0 7.800H.6V26Q.6 28.500 3 28.500H8.300V27a3.900 3.900 0 0 1 7.800 0v1.500H21q2.500 0 2.500-2.500V20.700H25a3.600 3.600 0 0 0 0-7.200Z" fill="currentColor" /></StatusIcon>
            <StatusIcon $w={2.2} $h={2.2} $gap={1.4} viewBox="0 0 44 44"><circle cx="22" cy="22" r="22" fill="#06070c" /><path d="M15 37 15.500 22 20 18.500H25L30 22 30.500 37Z" fill="#3f4146" /><path d="M21 19 23 31 25 19Z" fill="#e9e9ec" /><path d="M23 20V30" stroke="#0a0a0a" strokeWidth="1.500" /><ellipse cx="23" cy="14" rx="3" ry="4.300" fill="#d3a288" /><path d="M19.800 13q0-5 3.200-4.500 3.500 0 3.200 4-3-2-6.400.5Z" fill="#3c2a20" /></StatusIcon>
            <StatusIcon $w={0.4} $h={1.4} $gap={1.9} viewBox="0 0 8 28"><g fill="currentColor"><circle cx="4" cy="4" r="3.200" /><circle cx="4" cy="14" r="3.200" /><circle cx="4" cy="24" r="3.200" /></g></StatusIcon>
          </Actions>
        </Toolbar>

        <Masthead>
          <Title>You're Invited to a Spooktacular Event!</Title>
          <Links>
            {links.map(([Icon, label]) => <Link key={label}><Icon />{label}</Link>)}
          </Links>
        </Masthead>
        <Page>
          <Heading>Attendee Registration:</Heading>
          {fields.map((f) => <Field key={f}>{f}<Input /></Field>)}
          <Submit>SUBMIT</Submit>
        </Page>
      </Window>

      <DockBar>
        {dock.map((entry, i) => {
          if (!entry) return <Divider key={i} />;
          const [Icon, running] = entry;
          return <Cell key={i}><Icon />{running && <Running />}</Cell>;
        })}
      </DockBar>
    </Desktop>
  );
}
